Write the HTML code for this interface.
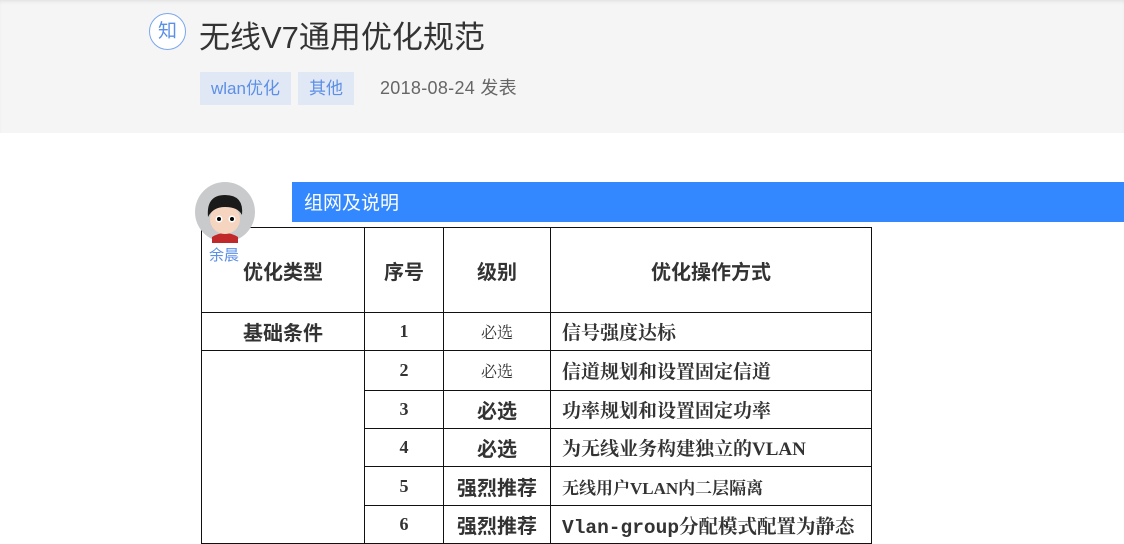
<!DOCTYPE html>
<html><head><meta charset="utf-8"><style>
body{margin:0;width:1124px;height:537px;overflow:hidden;background:#fff;font-family:"Liberation Sans","Noto Sans CJK SC",sans-serif;position:relative}
.hdr{position:absolute;left:0;top:0;width:1124px;height:133px;background:#f5f5f5;box-shadow:inset 0 3px 4px -2px #ddd}
.a{position:absolute}
.zhi{left:149px;top:13px;width:37px;height:37px;border:1px solid #7aa7ee;border-radius:50%;color:#5c8fe6;font-size:19px;text-align:center;line-height:36px;background:#fff;box-sizing:border-box}
.title{left:199px;top:18px;font-size:31px;color:#333;line-height:40px}
.tag{top:72px;height:33px;line-height:33px;background:#e1e8f5;color:#5c8fe6;font-size:17px;padding:0 11px}
.date{left:380px;top:72px;line-height:33px;font-size:18px;color:#666;letter-spacing:0.3px}
.bar{left:292px;top:182px;width:832px;height:40px;background:#3388ff;color:#fff;font-size:19px;line-height:44px;padding-left:12px;box-sizing:border-box}
table{position:absolute;left:201px;top:227px;border-collapse:collapse;font-family:"Liberation Serif","Noto Serif CJK SC",serif;color:#333}
td{border:1px solid #111;padding:0;text-align:center;font-size:18px;font-weight:bold}
td.s{font-family:"Liberation Sans","Noto Sans CJK SC",sans-serif}
td.l{text-align:left;padding-left:11px;font-weight:bold;font-size:19px}
.n{font-weight:normal;font-size:16px}
</style></head><body>
<div class="hdr"></div>
<div class="a zhi">知</div>
<div class="a title">无线V7通用优化规范</div>
<div class="a tag" style="left:200px">wlan优化</div>
<div class="a tag" style="left:298px">其他</div>
<div class="a date">2018-08-24 发表</div>
<div class="a bar">组网及说明</div>
<table>
<tr style="height:85px"><td class="s" style="width:162px;font-size:20px">优化类型</td><td class="s" style="width:78px;font-size:20px">序号</td><td class="s" style="width:106px;font-size:20px">级别</td><td class="s" style="width:320px;font-size:20px">优化操作方式</td></tr>
<tr style="height:38px"><td class="s" style="font-size:20px">基础条件</td><td>1</td><td class="n">必选</td><td class="l">信号强度达标</td></tr>
<tr style="height:40px"><td rowspan="6"></td><td>2</td><td class="n">必选</td><td class="l">信道规划和设置固定信道</td></tr>
<tr style="height:38px"><td>3</td><td class="s" style="font-size:20px">必选</td><td class="l">功率规划和设置固定功率</td></tr>
<tr style="height:38px"><td>4</td><td class="s" style="font-size:20px">必选</td><td class="l">为无线业务构建独立的VLAN</td></tr>
<tr style="height:39px"><td>5</td><td class="s" style="font-size:20px">强烈推荐</td><td class="l" style="font-size:17px">无线用户VLAN内二层隔离</td></tr>
<tr style="height:38px"><td>6</td><td class="s" style="font-size:20px">强烈推荐</td><td class="l" style="font-family:'Liberation Mono','Noto Serif CJK SC',monospace;font-size:19.5px">Vlan-group分配模式配置为静态</td></tr>
</table>
<svg class="a" style="left:194px;top:181px" width="62" height="62" viewBox="0 0 62 62">
<circle cx="31" cy="31" r="30" fill="#c8cacc"/>
<path d="M18 56 q13 -8 26 0 v6 h-26z" fill="#c0282a"/>
<ellipse cx="31" cy="38" rx="15" ry="15" fill="#f6d5c0"/>
<path d="M14 36 q-2 -22 17 -22 q19 0 17 20 q-4 -8 -17 -8 q-12 0 -17 10z" fill="#1a1a1a"/>
<circle cx="25" cy="38" r="3.5" fill="#fff"/><circle cx="25" cy="38" r="2" fill="#000"/>
<circle cx="38" cy="38" r="3.5" fill="#fff"/><circle cx="38" cy="38" r="2" fill="#000"/>
</svg>
<div class="a" style="left:209px;top:244px;font-size:15px;color:#5c8fe6">余晨</div>
</body></html>
